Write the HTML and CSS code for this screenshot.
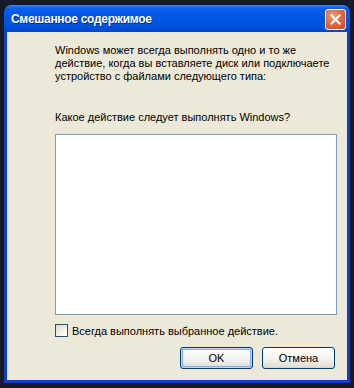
FILE: index.html
```html
<!DOCTYPE html>
<html lang="ru">
<head>
  <meta charset="UTF-8" />
  <title>Смешанное содержимое</title>
  <link rel="stylesheet" href="styles.css">
</head>
<body>
  <div class="window">
    <div class="titlebar">
      <span class="title">Смешанное содержимое</span>
      <span class="close">
        <svg width="11" height="11" viewBox="0 0 11 11">
          <path d="M1.5 1.5 L9.5 9.5 M9.5 1.5 L1.5 9.5" stroke="#fff" stroke-width="2" stroke-linecap="square"/>
        </svg>
      </span>
    </div>
    <div class="content">
      <p class="intro">Windows может всегда выполнять одно и то же<br>действие, когда вы вставляете диск или подключаете<br>устройство с файлами следующего типа:</p>
      <p class="question">Какое действие следует выполнять Windows?</p>
      <div class="listbox"></div>
      <label class="check">
        <span class="box"></span>
        Всегда выполнять выбранное действие.
      </label>
      <div class="buttons">
        <button class="btn default">OK</button>
        <button class="btn">Отмена</button>
      </div>
    </div>
  </div>
</body>
</html>
```

FILE: styles.css
```css
* {
  box-sizing: border-box;
}

body {
  margin: 0;
  width: 354px;
  height: 388px;
  padding: 5px 0 0 4px;
  background: #161b27;
  font-family: "Liberation Sans", Arial, sans-serif;
  font-size: 11px;
  color: #000;
  overflow: hidden;
}

.window {
  width: 346px;
  height: 378px;
  display: flex;
  flex-direction: column;
}

.titlebar {
  height: 27px;
  display: flex;
  align-items: center;
  justify-content: space-between;
  padding: 0 4px 0 7px;
  border-radius: 7px 7px 0 0;
  background: linear-gradient(#3b86f7 0%, #0b5fe9 12%, #0056e5 45%, #0052de 80%, #0046c4 100%);
}

.title {
  color: #fff;
  font-weight: bold;
  font-size: 12px;
  letter-spacing: -0.3px;
  text-shadow: 1px 1px 0 #0a2a8a;
}

.close {
  width: 21px;
  height: 21px;
  border: 1px solid #fff;
  border-radius: 3px;
  background: radial-gradient(circle at 35% 30%, #f0a080 0%, #e06a40 45%, #c64a26 100%);
  display: flex;
  align-items: center;
  justify-content: center;
  margin-top: 1px;
}

.content {
  flex: 1;
  background: #ece9d8;
  border: 3px solid #0a40cc;
  border-top: none;
  padding: 12px 10px 0 48px;
}

.intro,
.question {
  margin: 0;
  line-height: 13px;
  white-space: nowrap;
}

.question {
  margin-top: 28px;
}

.listbox {
  margin-top: 10px;
  width: 282px;
  height: 181px;
  background: #fff;
  border: 1px solid #7f9db9;
}

.check {
  display: flex;
  align-items: center;
  gap: 4px;
  margin-top: 9px;
  height: 13px;
}

.box {
  width: 13px;
  height: 13px;
  border: 1px solid #1c5180;
  background: linear-gradient(135deg, #dcd9cf 0%, #f4f3ee 60%, #fff 100%);
}

.buttons {
  display: flex;
  justify-content: flex-end;
  gap: 9px;
  margin-top: 10px;
  padding-right: 2px;
}

.btn {
  width: 73px;
  height: 22px;
  font-family: "Liberation Sans", Arial, sans-serif;
  font-size: 11px;
  color: #000;
  border: 1px solid #003c74;
  border-radius: 3px;
  background: linear-gradient(#fff 0%, #f5f4ef 50%, #e3e2da 90%, #d6d0c5 100%);
  padding: 0;
}

.btn.default {
  box-shadow: inset 0 0 0 1px #bcd4f6, inset 0 0 0 2px #89ade4;
}
```
